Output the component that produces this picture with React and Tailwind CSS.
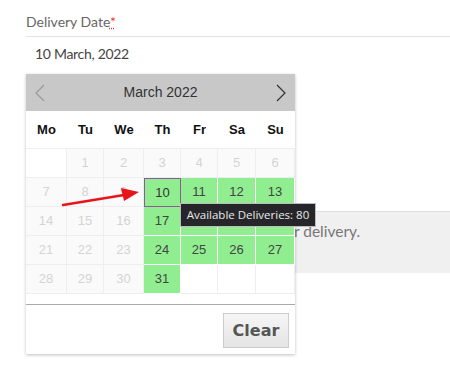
const days = ["Mo", "Tu", "We", "Th", "Fr", "Sa", "Su"];

const weeks = [
  [null, 1, 2, 3, 4, 5, 6],
  [7, 8, 9, 10, 11, 12, 13],
  [14, 15, 16, 17, 18, 19, 20],
  [21, 22, 23, 24, 25, 26, 27],
  [28, 29, 30, 31, null, null, null],
];

function DayCell({ day, col }) {
  if (day === null) {
    return <div className="h-[29px] border-r border-b border-[#eeeeee] bg-white" />;
  }
  if (day >= 10 && col >= 3) {
    return (
      <div
        className={
          day === 10
            ? "flex h-[29px] items-center justify-center border border-[#8e5a9b] bg-[#90ee90] text-[13px] text-[#333]"
            : "flex h-[29px] items-center justify-center border-r border-b border-white bg-[#90ee90] text-[13px] text-[#444]"
        }
      >
        {day}
      </div>
    );
  }
  return (
    <div className="flex h-[29px] items-center justify-center border-r border-b border-[#eeeeee] bg-[#fafafa] text-[13px] text-[#d4d4d4]">
      {day}
    </div>
  );
}

export default function App() {
  return (
    <div className="relative h-[380px] w-[450px] overflow-hidden bg-white font-['Lato',sans-serif]">
      <div className="pl-[26px] pt-[11px]">
        <div className="text-[14px] text-[#666]">
          Delivery Date
          <span className="text-[#e33] underline decoration-dotted">*</span>
        </div>
        <div className="mt-[4px] border-t border-[#e2e2e2] pt-[6px] pl-[9px] pb-[26px] text-[14px] tracking-[-0.3px] text-[#444]">
          10 March, 2022
        </div>
        <div className="mt-[121px] h-[62px] border-t border-[#dddddd] bg-[#f0f0f0] pl-[117px] pt-[8px] text-[15.5px] text-[#777]">
          Please select a date for delivery.
        </div>
      </div>

      <div className="absolute left-[26px] top-[74px] w-[269px] bg-white shadow-[0_1px_3px_rgba(0,0,0,0.25)] font-['Liberation_Sans',Arial,sans-serif]">
        <div className="flex h-[37px] items-center justify-between bg-[#c8c8c8] px-[8px]">
          <svg width="12" height="18" viewBox="0 0 12 18" fill="none">
            <path d="M10 1 L2 9 L10 17" stroke="#9a9a9a" strokeWidth="1.2" />
          </svg>
          <span className="text-[14px] text-[#333]">March 2022</span>
          <svg width="12" height="18" viewBox="0 0 12 18" fill="none">
            <path d="M2 1 L10 9 L2 17" stroke="#333" strokeWidth="1.2" />
          </svg>
        </div>
        <div className="grid grid-cols-[41px_37px_40px_37px_37px_38px_39px]">
          {days.map((d) => (
            <div
              key={d}
              className="flex h-[37px] items-center justify-center text-[13px] font-bold text-[#111]"
            >
              {d}
            </div>
          ))}
        </div>
        <div className="grid grid-cols-[41px_37px_40px_37px_37px_38px_39px] border-t border-[#eeeeee]">
          {weeks.flat().map((day, i) => (
            <DayCell key={i} day={day} col={i % 7} />
          ))}
        </div>
        <div className="mt-[10px] flex justify-end border-t border-[#aaaaaa] pt-[8px] pr-[6px] pb-[6px]">
          <button className="h-[35px] w-[66px] border border-[#cccccc] bg-gradient-to-b from-[#f6f6f6] to-[#e4e4e4] font-['DejaVu_Sans',sans-serif] text-[16px] font-bold text-[#555]">
            Clear
          </button>
        </div>
      </div>

      <svg
        className="absolute left-[60px] top-[184px]"
        width="90"
        height="26"
        viewBox="0 0 90 26"
      >
        <path d="M3 21 L64 11" stroke="#e8141b" strokeWidth="2.5" strokeLinecap="round" />
        <path d="M79 8 L61 4 L64 17 Z" fill="#e8141b" />
      </svg>

      <div className="absolute left-[180px] top-[203px] flex h-[24px] w-[136px] items-center justify-center border border-[#bbbbbb] bg-[#26262a] font-['Open_Sans',sans-serif] text-[11.5px] text-[#e8e8e8]">
        Available Deliveries: 80
      </div>
    </div>
  );
}
